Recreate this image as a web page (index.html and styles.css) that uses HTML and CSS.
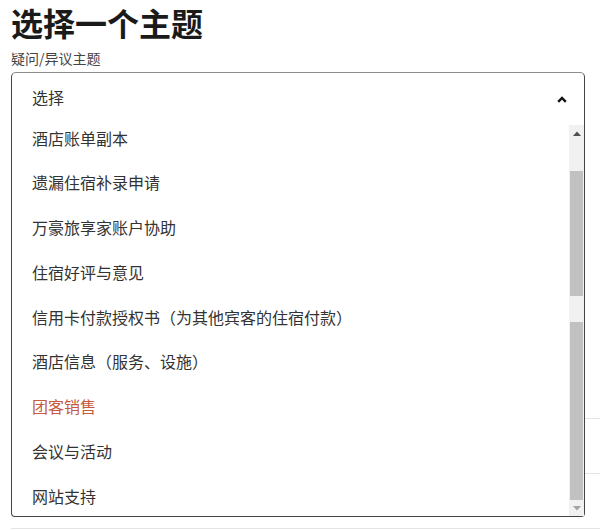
FILE: index.html
```html
<!DOCTYPE html>
<html lang="zh-CN">
<head>
<meta charset="utf-8">
<title>选择一个主题</title>
<link rel="stylesheet" href="styles.css">
</head>
<body>
<main class="page">
  <h1 class="title">选择一个主题</h1>
  <label class="label">疑问/异议主题</label>
  <div class="field">
    <div class="combo">
      <span class="combo-text">选择</span>
      <svg class="chev" width="10" height="7" viewBox="0 0 10 7"><polyline points="1.2,5.8 5,2 8.8,5.8" fill="none" stroke="#111" stroke-width="2.4"/></svg>
    </div>
    <div class="listbox">
      <div class="list-viewport">
        <ul class="options">
          <li>酒店账单副本</li>
          <li>遗漏住宿补录申请</li>
          <li>万豪旅享家账户协助</li>
          <li>住宿好评与意见</li>
          <li>信用卡付款授权书（为其他宾客的住宿付款）</li>
          <li>酒店信息（服务、设施）</li>
          <li class="active">团客销售</li>
          <li>会议与活动</li>
          <li>网站支持</li>
        </ul>
      </div>
      <div class="scrollbar">
        <div class="sb-btn sb-up"><svg width="8" height="5" viewBox="0 0 8 5"><polygon points="0,5 4,0.5 8,5" fill="#505050"/></svg></div>
        <div class="sb-track sb-t1"></div>
        <div class="sb-thumb sb-th1"></div>
        <div class="sb-track sb-t2"></div>
        <div class="sb-thumb sb-th2"></div>
        <div class="sb-btn sb-down"><svg width="8" height="5" viewBox="0 0 8 5"><polygon points="0,0 8,0 4,4.5" fill="#a3a3a3"/></svg></div>
      </div>
    </div>
    <div class="behind">
      <div class="row"></div>
      <div class="row"></div>
      <div class="row"></div>
    </div>
  </div>
</main>
</body>
</html>
```

FILE: styles.css
```css
* { box-sizing: border-box; }
html, body { margin: 0; padding: 0; background: #fff; }
body {
  font-family: "Noto Sans CJK SC", "Noto Sans", sans-serif;
  color: #333;
  width: 600px;
  height: 530px;
  overflow: hidden;
}
.page { padding-left: 11px; }
.title {
  margin: 0;
  font-size: 32px;
  font-weight: 700;
  line-height: 44px;
  color: #1a1a1a;
}
.label {
  display: block;
  font-size: 14px;
  line-height: 20px;
  margin-top: 4px;
  color: #444;
}
.field {
  position: relative;
  margin-top: 4px;
}
.combo {
  width: 574px;
  height: 53px;
  border: 1px solid #444;
  border-top-color: #8c8c8c;
  border-bottom: none;
  border-radius: 5px 5px 0 0;
  display: flex;
  align-items: flex-start;
  justify-content: space-between;
  padding: 13px 17px 0 20px;
  background: #fff;
}
.combo-text {
  font-size: 16px;
  line-height: 22px;
  color: #333;
}
.chev { margin-top: 10px; }
.listbox {
  position: absolute;
  top: 53px;
  left: 0;
  width: 574px;
  height: 392px;
  border: 1px solid #444;
  border-top: none;
  border-radius: 0 0 4px 4px;
  background: #fff;
  display: flex;
  z-index: 2;
}
.list-viewport {
  flex: 1;
  overflow: hidden;
}
.options {
  list-style: none;
  margin: -9.4px 0 0 0;
  padding: 0;
}
.options li {
  height: 44.75px;
  line-height: 44.75px;
  padding-left: 20px;
  font-size: 16px;
  color: #333;
  white-space: nowrap;
}
.options li.active { color: #c65a3e; }
.scrollbar {
  width: 15px;
  display: flex;
  flex-direction: column;
  background: #f1f1f1;
}
.sb-btn {
  height: 16px;
  display: flex;
  align-items: center;
  justify-content: center;
  background: #f1f1f1;
}
.sb-up { padding-top: 1px; }
.sb-t1 { height: 30px; }
.sb-thumb { background: #c1c1c1; margin: 0 1px; }
.sb-th1 { height: 125px; }
.sb-t2 { height: 26px; }
.sb-th2 { flex: 1; }
.behind {
  width: 589px;
  padding-top: 239px;
}
.row {
  height: 55px;
  border-bottom: 1px solid #e4e4e4;
}
```
